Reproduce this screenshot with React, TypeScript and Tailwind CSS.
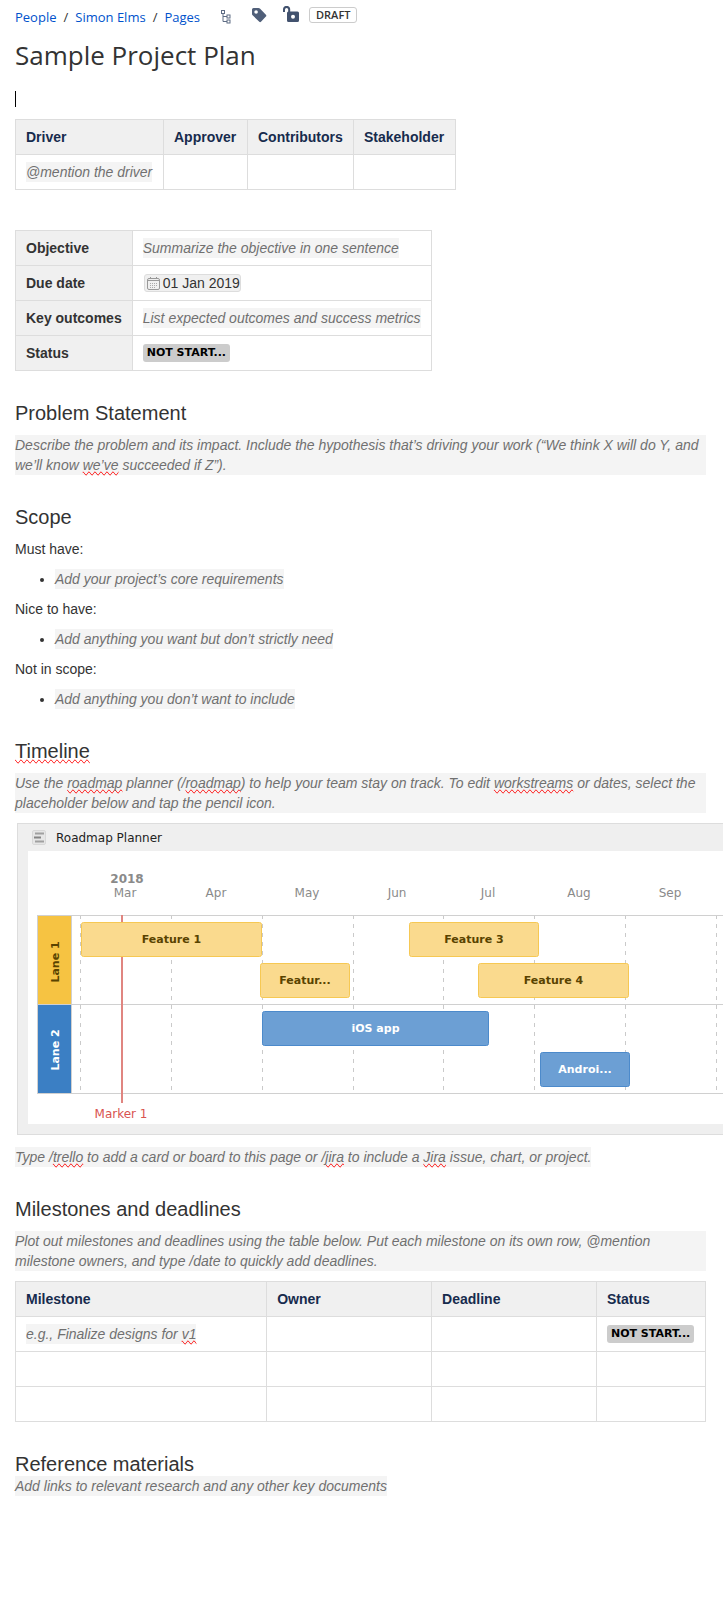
import type { ReactNode } from "react";

const cell = "border border-[#ddd] px-[10px] py-[7px] text-left align-top h-[35px]";
const headCell = cell + " bg-[#f0f0f0] font-bold text-[#172b4d]";
const sideCell = cell + " bg-[#f0f0f0] font-bold text-[#333]";

function Heading({ children }: { children: ReactNode }) {
  return <h2 className="mt-[30px] text-[20px] leading-6">{children}</h2>;
}

function Hint({ children }: { children: ReactNode }) {
  return <span className="inline-block bg-[#f4f4f4] align-top text-[#707070] italic">{children}</span>;
}

function HintBlock({ children }: { children: ReactNode }) {
  return <p className="mt-[10px] bg-[#f4f4f4] text-[#707070] italic">{children}</p>;
}

function Typo({ children }: { children: ReactNode }) {
  return <span className="[text-decoration-line:spelling-error]">{children}</span>;
}

function StatusTag() {
  return (
    <span className="flex h-5 items-center">
      <span className="h-[18px] rounded-[3px] bg-[#ccc] px-1 font-['DejaVu_Sans',sans-serif] text-[11px] leading-[18px] font-bold whitespace-nowrap text-black">
        NOT START...
      </span>
    </span>
  );
}

function ScopeList({ title, item }: { title: string; item: string }) {
  return (
    <>
      <p className="mt-[10px]">{title}</p>
      <ul className="mt-[10px] list-disc pl-10">
        <li>
          <Hint>{item}</Hint>
        </li>
      </ul>
    </>
  );
}

const months = ["Mar", "Apr", "May", "Jun", "Jul", "Aug", "Sep"];
const monthX = [97, 188, 279, 369, 460, 551, 642];
const gridX = [52, 143, 234, 325, 415, 506, 597, 688];
const bars = [
  { label: "Feature 1", x: 53, y: 71, w: 181, blue: false },
  { label: "Featur...", x: 232, y: 112, w: 90, blue: false },
  { label: "Feature 3", x: 381, y: 71, w: 130, blue: false },
  { label: "Feature 4", x: 450, y: 112, w: 151, blue: false },
  { label: "iOS app", x: 234, y: 160, w: 227, blue: true },
  { label: "Androi...", x: 512, y: 201, w: 90, blue: true },
];

function RoadmapChart() {
  return (
    <svg
      className="block w-full bg-white font-['DejaVu_Sans',sans-serif]"
      height="273"
      role="img"
      aria-label="Roadmap"
    >
      <g fill="#8a8a8a" fontSize="12" textAnchor="middle">
        <text x="99" y="32" fontWeight="bold">2018</text>
        {months.map((m, i) => (
          <text key={m} x={monthX[i]} y="46">{m}</text>
        ))}
      </g>
      {gridX.map((x) => (
        <line key={x} x1={x + 0.5} x2={x + 0.5} y1="64" y2="242" stroke="#cacaca" strokeDasharray="4 5" />
      ))}
      <rect x="9" y="65" width="34" height="88" fill="#f6c342" />
      <rect x="9" y="154" width="34" height="88" fill="#3b7fc4" />
      <g stroke="#d0d0d0">
        <line x1="9" x2="100%" y1="64.5" y2="64.5" />
        <line x1="9" x2="100%" y1="153.5" y2="153.5" />
        <line x1="9" x2="100%" y1="242.5" y2="242.5" />
        <line x1="9.5" x2="9.5" y1="64" y2="243" />
        <line x1="43.5" x2="43.5" y1="64" y2="243" />
      </g>
      <line x1="94" x2="94" y1="64" y2="252" stroke="#e08580" strokeWidth="2" />
      <g fontSize="11" fontWeight="bold" textAnchor="middle">
        <text transform="translate(31 111) rotate(-90)" fill="#594300">Lane 1</text>
        <text transform="translate(31 199) rotate(-90)" fill="#fff">Lane 2</text>
        {bars.map((b) => (
          <g key={b.label}>
            <rect
              x={b.x + 0.5}
              y={b.y + 0.5}
              width={b.w - 1}
              height="34"
              rx="2"
              fill={b.blue ? "#6c9fd4" : "#fada8e"}
              stroke={b.blue ? "#4c8acb" : "#f6c853"}
            />
            <text x={b.x + b.w / 2} y={b.y + 21} fill={b.blue ? "#fff" : "#594300"}>
              {b.label}
            </text>
          </g>
        ))}
      </g>
      <text x="93" y="267" fill="#d9534f" fontSize="12" textAnchor="middle">Marker 1</text>
    </svg>
  );
}

export default function App() {
  return (
    <main className="min-h-screen overflow-hidden bg-white pr-[17px] pb-10 pl-[15px] font-['Liberation_Sans',Arial,sans-serif] text-[14px] leading-5 text-[#333]">
      <header className="font-['Open_Sans',sans-serif]">
        <div className="flex h-[30px] items-center pt-1">
          <nav aria-label="Breadcrumb" className="flex gap-[7px] text-[13px] text-[#0052cc]">
            <a href="#people">People</a>
            <span className="text-[#333]">/</span>
            <a href="#simon-elms">Simon Elms</a>
            <span className="text-[#333]">/</span>
            <a href="#pages">Pages</a>
          </nav>
          <div className="ml-5 flex items-center">
            <button type="button" aria-label="Page tree" className="mr-[19px]">
              <svg width="12" height="14" viewBox="0 0 12 14" fill="none" stroke="#5e6c84">
                <rect x="1.5" y="0.5" width="3" height="3" />
                <rect x="7" y="5" width="3" height="3" />
                <rect x="7" y="10" width="3" height="3" />
                <path d="M3 4v7.5h4M3 6.500h4" />
              </svg>
            </button>
            <button type="button" aria-label="Labels" className="mr-4 -mt-[5px]">
              <svg width="16" height="16" viewBox="0 0 16 16" fill="#505f79">
                <path
                  fillRule="evenodd"
                  d="M2.500 1h5q.8 0 1.400.6l6 6.200q.9.900 0 1.700l-4.900 5.200q-.9.900-1.700 0L1.600 8.300Q1 7.700 1 6.900V2.500Q1 1 2.500 1Zm2.600 2.200a1.800 1.800 0 1 0 0 3.600 1.800 1.800 0 0 0 0-3.600Z"
                />
              </svg>
            </button>
            <button type="button" aria-label="Restrictions" className="mr-[10px] -mt-[6px]">
              <svg width="16" height="16" viewBox="0 0 16 16">
                <path d="M1 6V3.500a2.600 2.600 0 0 1 5.200 0V6" fill="none" stroke="#42526e" strokeWidth="2" />
                <path
                  fill="#42526e"
                  fillRule="evenodd"
                  d="M5.500 5.500H14.500Q16 5.500 16 7v7.500Q16 16 14.500 16h-9Q4 16 4 14.500V7q0-1.500 1.500-1.500ZM10 8.800a2 2 0 1 0 0 4 2 2 0 0 0 0-4Z"
                />
              </svg>
            </button>
            <span className="-mt-[5px] h-4 rounded-[3px] border border-[#ccc] px-[6px] text-[11px] leading-[14px] font-semibold">
              DRAFT
            </span>
          </div>
        </div>
        <h1 className="mt-[9px] text-[26px] leading-8">Sample Project Plan</h1>
      </header>

      <p className="mt-[18px] flex h-5 items-center">
        <span className="h-4 w-px bg-black" />
      </p>

      <table className="mt-[10px] border-collapse">
        <colgroup>
          <col className="w-[148px]" />
          <col className="w-[84px]" />
          <col className="w-[106px]" />
          <col className="w-[102px]" />
        </colgroup>
        <thead>
          <tr>
            <th className={headCell}>Driver</th>
            <th className={headCell}>Approver</th>
            <th className={headCell}>Contributors</th>
            <th className={headCell}>Stakeholder</th>
          </tr>
        </thead>
        <tbody>
          <tr>
            <td className={cell}><Hint>@mention the driver</Hint></td>
            <td className={cell} />
            <td className={cell} />
            <td className={cell} />
          </tr>
        </tbody>
      </table>

      <table className="mt-10 border-collapse">
        <tbody>
          <tr>
            <th scope="row" className={sideCell}>Objective</th>
            <td className={cell}><Hint>Summarize the objective in one sentence</Hint></td>
          </tr>
          <tr>
            <th scope="row" className={sideCell}>Due date</th>
            <td className={cell}>
              <span className="flex h-5 items-center">
                <time
                  dateTime="2019-01-01"
                  className="ml-px flex h-[18px] items-center gap-[3px] rounded-[3px] border border-[#ddd] bg-[#f0f0f0] pl-[2px]"
                >
                  <svg width="13" height="13" viewBox="0 0 13 13" fill="none" stroke="#999">
                    <rect x="0.500" y="1.500" width="12" height="11" rx="1.500" />
                    <path d="M1 3.500h11M3.500 0v2M9.500 0v2" />
                    <path d="M3 6.500h8M3 8.500h8M3 10.500h5" stroke="#aaa" strokeDasharray="1 1" />
                  </svg>
                  01 Jan 2019
                </time>
              </span>
            </td>
          </tr>
          <tr>
            <th scope="row" className={sideCell}>Key outcomes</th>
            <td className={cell}><Hint>List expected outcomes and success metrics</Hint></td>
          </tr>
          <tr>
            <th scope="row" className={sideCell}>Status</th>
            <td className={cell}><StatusTag /></td>
          </tr>
        </tbody>
      </table>

      <Heading>Problem Statement</Heading>
      <HintBlock>
        Describe the problem and its impact. Include the hypothesis that’s driving your work (“We think X will do Y, and
        we’ll know <Typo>we’ve</Typo> succeeded if Z”).
      </HintBlock>

      <Heading>Scope</Heading>
      <ScopeList title="Must have:" item="Add your project’s core requirements" />
      <ScopeList title="Nice to have:" item="Add anything you want but don’t strictly need" />
      <ScopeList title="Not in scope:" item="Add anything you don’t want to include" />

      <Heading><Typo>Timeline</Typo></Heading>
      <HintBlock>
        Use the <Typo>roadmap</Typo> planner (/<Typo>roadmap</Typo>) to help your team stay on track. To edit{" "}
        <Typo>workstreams</Typo> or dates, select the placeholder below and tap the pencil icon.
      </HintBlock>

      <section
        aria-label="Roadmap Planner"
        className="mt-[10px] -mr-[17px] ml-[2px] border-y border-l border-[#ddd] bg-[#efefef] pb-[10px] pl-[10px]"
      >
        <div className="flex h-[27px] items-center gap-[10px] pl-1 font-['DejaVu_Sans',sans-serif] text-[12px] text-[#222]">
          <svg width="14" height="15" viewBox="0 0 14 15" fill="none">
            <rect x="0.5" y="0.5" width="13" height="14" rx="1.5" fill="#e6e6e6" stroke="#d8d8d8" />
            <path d="M3 3.500h9M3 11.500h9" stroke="#a0a0a0" strokeWidth="2" />
            <path d="M2 7.500h7" stroke="#858585" strokeWidth="2" />
          </svg>
          Roadmap Planner
        </div>
        <RoadmapChart />
      </section>

      <p className="mt-3 flex">
        <Hint>
          Type /<Typo>trello</Typo> to add a card or board to this page or /<Typo>jira</Typo> to include a{" "}
          <Typo>Jira</Typo> issue, chart, or project.
        </Hint>
      </p>

      <Heading>Milestones and deadlines</Heading>
      <HintBlock>
        Plot out milestones and deadlines using the table below. Put each milestone on its own row, @mention milestone
        owners, and type /date to quickly add deadlines.
      </HintBlock>

      <table className="mt-[10px] w-full table-fixed border-collapse">
        <colgroup>
          <col className="w-[36.4%]" />
          <col className="w-[23.9%]" />
          <col className="w-[23.9%]" />
          <col className="w-[15.8%]" />
        </colgroup>
        <thead>
          <tr>
            <th className={headCell}>Milestone</th>
            <th className={headCell}>Owner</th>
            <th className={headCell}>Deadline</th>
            <th className={headCell}>Status</th>
          </tr>
        </thead>
        <tbody>
          <tr>
            <td className={cell}><Hint>e.g., Finalize designs for <Typo>v1</Typo></Hint></td>
            <td className={cell} />
            <td className={cell} />
            <td className={cell}><StatusTag /></td>
          </tr>
          {[1, 2].map((row) => (
            <tr key={row}>
              <td className={cell} />
              <td className={cell} />
              <td className={cell} />
              <td className={cell} />
            </tr>
          ))}
        </tbody>
      </table>

      <Heading>Reference materials</Heading>
      <p className="flex">
        <Hint>Add links to relevant research and any other key documents</Hint>
      </p>
    </main>
  );
}
